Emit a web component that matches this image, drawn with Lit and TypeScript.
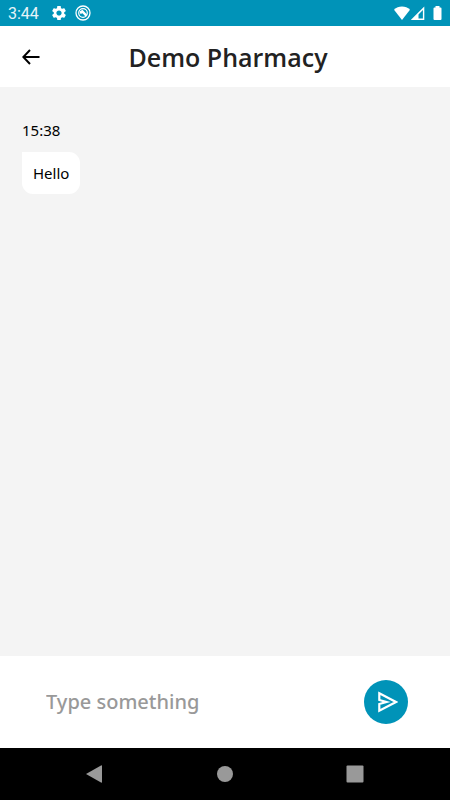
import { LitElement, html, css } from "lit";
import { customElement, property, state } from "lit/decorators.js";

@customElement("status-bar")
class StatusBar extends LitElement {
  static styles = css`
    :host {
      display: flex;
      align-items: center;
      justify-content: space-between;
      height: 26px;
      padding: 0 8px;
      background: #0093b8;
      color: #fff;
      font: 16px/26px Roboto, sans-serif;
    }
    .group {
      display: flex;
      align-items: center;
    }
    .left {
      gap: 8px;
    }
    .clock {
      padding-top: 2px;
      margin-right: 4px;
      color: #e6f4f8;
    }
    svg {
      display: block;
      fill: currentColor;
    }
  `;

  render() {
    return html`
      <div class="group left">
        <span class="clock">3:44</span>
        <svg width="16" height="16" viewBox="1 1 22 22" aria-hidden="true">
          <path
            d="M19.14 12.94c.04-.3.06-.61.06-.94 0-.32-.02-.64-.07-.94l2.03-1.58c.18-.14.23-.41.12-.61l-1.92-3.32c-.12-.22-.37-.29-.59-.22l-2.39.96c-.5-.38-1.03-.7-1.62-.94l-.36-2.54c-.04-.24-.24-.41-.48-.41h-3.84c-.24 0-.43.17-.47.41l-.36 2.54c-.59.24-1.13.57-1.62.94l-2.39-.96c-.22-.08-.47 0-.59.22L2.74 8.87c-.12.21-.08.47.12.61l2.03 1.58c-.05.3-.09.63-.09.94s.02.64.07.94l-2.03 1.58c-.18.14-.23.41-.12.61l1.92 3.32c.12.22.37.29.59.22l2.39-.96c.5.38 1.03.7 1.62.94l.36 2.54c.05.24.24.41.48.41h3.84c.24 0 .44-.17.47-.41l.36-2.54c.59-.24 1.13-.56 1.62-.94l2.39.96c.22.08.47 0 .59-.22l1.92-3.32c.12-.22.07-.47-.12-.61l-2.01-1.58zM12 15.6c-1.98 0-3.6-1.62-3.6-3.6s1.62-3.6 3.6-3.6 3.6 1.62 3.6 3.6-1.62 3.6-3.6 3.6z"
          />
        </svg>
        <svg width="16" height="16" viewBox="0 0 16 16" aria-hidden="true">
          <circle cx="8" cy="8" r="7" fill="none" stroke="currentColor" stroke-width="1.3" />
          <circle cx="8" cy="8" r="4.300" fill="none" stroke="currentColor" stroke-width="1.2" />
          <path d="M4.500 6.500L7.500 4.800L12 9.500L10.500 11.500L7.500 8.300L5.500 9Z" />
        </svg>
      </div>
      <div class="group">
        <svg width="17" height="14" viewBox="0 0 17 14" aria-hidden="true">
          <path d="M8 14L0 3.700Q3.400 .4 8 .4T16 3.700Z" />
        </svg>
        <svg width="16" height="14" viewBox="1 0 16 14" aria-hidden="true">
          <path fill-rule="evenodd" d="M.7 14L14.300 .4V14ZM8.500 12.600H12.900V4L8.500 8.400Z" />
        </svg>
        <svg width="15" height="14" viewBox="0 0 15 14" aria-hidden="true">
          <path d="M8.500 0H12.500V1.400H13.500Q14.500 1.400 14.500 2.400V13Q14.500 14 13.500 14H7.500Q6.500 14 6.500 13V2.400Q6.500 1.400 7.500 1.400H8.500Z" />
        </svg>
      </div>
    `;
  }
}

@customElement("chat-message")
class ChatMessage extends LitElement {
  @property() time = "";
  @property() text = "";

  static styles = css`
    :host {
      display: flex;
      flex-direction: column;
      align-items: flex-start;
      gap: 11px;
      color: #000;
      font: 15px/22px "Noto Sans", "Open Sans", sans-serif;
    }
    .bubble {
      padding: 10px 11px;
      border-radius: 0 11px 11px 11px;
      background: #fff;
    }
  `;

  render() {
    return html`
      <time>${this.time}</time>
      <div class="bubble">${this.text}</div>
    `;
  }
}

@customElement("nav-bar")
class NavBar extends LitElement {
  static styles = css`
    :host {
      display: grid;
      grid-template-columns: repeat(3, 1fr);
      height: 52px;
      padding: 0 30px;
      background: #000;
    }
    button {
      display: grid;
      place-items: center;
      padding: 0;
      border: 0;
      background: none;
    }
    svg {
      display: block;
      fill: #999;
    }
  `;

  render() {
    return html`
      <button aria-label="Back">
        <svg width="18" height="18" viewBox="0 0 18 18"><path d="M0 9L15 .5Q16 0 16 1V17Q16 18 15 17.500Z" /></svg>
      </button>
      <button aria-label="Home">
        <svg width="18" height="18" viewBox="0 0 18 18"><circle cx="9" cy="9" r="8" /></svg>
      </button>
      <button aria-label="Recent apps">
        <svg width="18" height="18" viewBox="0 0 18 18"><rect x=".5" y=".5" width="17" height="17" rx="1" /></svg>
      </button>
    `;
  }
}

@customElement("app-root")
class AppRoot extends LitElement {
  @state() private messages = [{ time: "15:38", text: "Hello" }];

  static styles = css`
    :host {
      display: flex;
      flex-direction: column;
      min-height: 100vh;
      background: #fff;
      font-family: "Open Sans", sans-serif;
    }
    .header {
      display: grid;
      grid-template-columns: 62px 1fr 56px;
      align-items: center;
      height: 61px;
    }
    .back {
      display: grid;
      place-items: center;
      height: 44px;
      padding: 0;
      border: 0;
      background: none;
    }
    h1 {
      margin: 0;
      color: #222;
      font-size: 25px;
      font-weight: 600;
      line-height: 32px;
      text-align: center;
      white-space: nowrap;
    }
    .messages {
      flex: 1;
      padding: 32px 22px;
      background: #f4f4f4;
    }
    .composer {
      display: flex;
      align-items: center;
      gap: 16px;
      height: 92px;
      padding: 0 42px 0 46px;
    }
    .field {
      flex: 1;
      min-width: 0;
      padding: 0;
      border: 0;
      outline: 0;
      background: none;
      color: #222;
      font: 500 20px/28px "Noto Sans", "Open Sans", sans-serif;
    }
    .field::placeholder {
      color: #999;
      opacity: 1;
    }
    .send {
      display: grid;
      place-items: center;
      width: 44px;
      height: 44px;
      padding: 0;
      border: 0;
      border-radius: 50%;
      background: #0093b8;
    }
    svg {
      display: block;
    }
  `;

  render() {
    return html`
      <status-bar></status-bar>
      <header class="header">
        <button class="back" aria-label="Go back">
          <svg width="18" height="16" viewBox="0 0 18 16" fill="none" stroke="#000" stroke-width="2">
            <path d="M17.500 8H1.500M8 1L1.300 8L8 15" />
          </svg>
        </button>
        <h1>Demo Pharmacy</h1>
      </header>
      <main class="messages">
        ${this.messages.map((m) => html`<chat-message .time=${m.time} .text=${m.text}></chat-message>`)}
      </main>
      <form class="composer" @submit=${(e: Event) => e.preventDefault()}>
        <input class="field" type="text" placeholder="Type something" aria-label="Message" />
        <button class="send" aria-label="Send">
          <svg width="24" height="24" viewBox="0 0 24 24" fill="none" stroke="#fff" stroke-width="2.200">
            <path d="M5.300 3.200L22 12L5.300 20.800V14L12.500 12L5.300 10Z" />
          </svg>
        </button>
      </form>
      <nav-bar></nav-bar>
    `;
  }
}
